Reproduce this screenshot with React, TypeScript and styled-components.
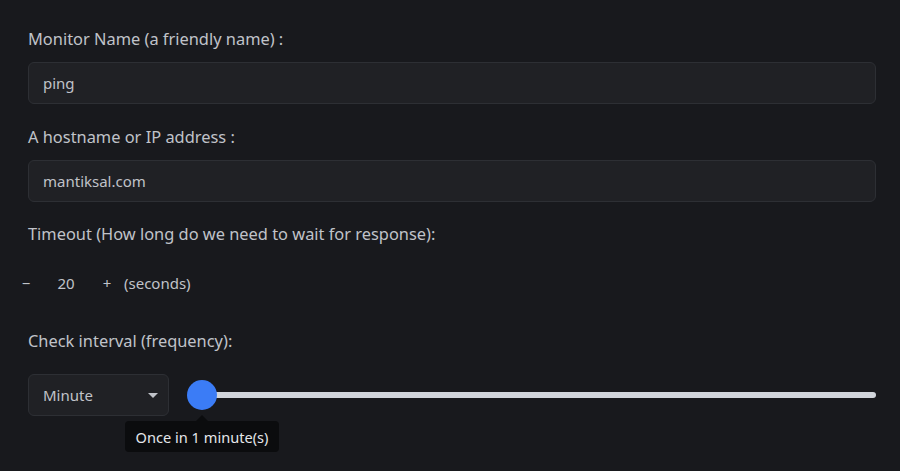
import React from "react";
import styled, { createGlobalStyle } from "styled-components";

const Global = createGlobalStyle`
  html, body { margin: 0; padding: 0; background: #18191d; }
  body { font-family: "Noto Sans", "Open Sans", sans-serif; color: #c0c3c9; }
  * { box-sizing: border-box; }
`;

const Page = styled.div`
  padding: 27px 24px 20px 28px;
  width: 900px;
  height: 471px;
  overflow: hidden;
`;

const Field = styled.div<{ $mb?: number }>`
  display: flex;
  flex-direction: column;
  margin-bottom: ${(p) => p.$mb ?? 21}px;
`;

const Label = styled.label`
  font-size: 16.4px;
  line-height: 24px;
  margin-bottom: 11px;
  color: #c0c3c9;
`;

const Input = styled.div`
  height: 42px;
  background: #202125;
  border: 1px solid #2d2f34;
  border-radius: 6px;
  padding: 0 14px;
  display: flex;
  align-items: center;
  font-size: 15px;
  color: #c0c3c9;
`;

const Stepper = styled.div`
  display: flex;
  align-items: center;
  height: 36px;
  margin-left: -12px;
  margin-top: 8px;
  font-size: 15px;
  color: #c0c3c9;
`;

const StepButton = styled.span<{ $w: number }>`
  width: ${(p) => p.$w}px;
  text-align: center;
`;

const StepValue = styled.span`
  width: 36px;
  text-align: center;
  margin: 0 15px 0 12px;
`;

const Unit = styled.span`
  margin-left: 9px;
`;

const Row = styled.div`
  display: flex;
  align-items: center;
  gap: 19px;
  margin-top: 10px;
`;

const Select = styled.div`
  width: 141px;
  height: 42px;
  background: #202125;
  border: 1px solid #2d2f34;
  border-radius: 6px;
  padding: 0 10px 0 14px;
  display: flex;
  align-items: center;
  justify-content: space-between;
  font-size: 15px;
  color: #c0c3c9;
`;

const Caret = styled.span`
  width: 0;
  height: 0;
  border-left: 5.5px solid transparent;
  border-right: 5.5px solid transparent;
  border-top: 5.5px solid #c0c3c9;
`;

const Slider = styled.div`
  position: relative;
  flex: 1;
  height: 30px;
  display: flex;
  align-items: center;
`;

const Track = styled.div`
  flex: 1;
  height: 6px;
  background: #d1d5db;
  border-radius: 3px;
  margin-left: 2px;
`;

const Thumb = styled.div`
  position: absolute;
  left: -1px;
  top: 0;
  width: 30px;
  height: 30px;
  border-radius: 50%;
  background: #3b7cf6;
`;

const Tooltip = styled.div`
  position: absolute;
  left: -63px;
  top: 41px;
  width: 154px;
  height: 31px;
  background: #0b0c0e;
  border-radius: 4px;
  color: #e4e6ea;
  font-size: 14.6px;
  display: flex;
  align-items: center;
  justify-content: center;
  &::before {
    content: "";
    position: absolute;
    left: 71px;
    top: -6px;
    border-left: 6px solid transparent;
    border-right: 6px solid transparent;
    border-bottom: 6px solid #0b0c0e;
  }
`;

export default function App() {
  return (
    <>
      <Global />
      <Page>
        <Field>
          <Label>Monitor Name (a friendly name) :</Label>
          <Input>ping</Input>
        </Field>
        <Field $mb={20}>
          <Label>A hostname or IP address :</Label>
          <Input>mantiksal.com</Input>
        </Field>
        <Field $mb={28}>
          <Label>Timeout (How long do we need to wait for response):</Label>
          <Stepper>
            <StepButton $w={20}>−</StepButton>
            <StepValue>20</StepValue>
            <StepButton $w={16}>+</StepButton>
            <Unit>(seconds)</Unit>
          </Stepper>
        </Field>
        <Field>
          <Label>Check interval (frequency):</Label>
          <Row>
            <Select>
              Minute
              <Caret />
            </Select>
            <Slider>
              <Track />
              <Thumb />
              <Tooltip>Once in 1 minute(s)</Tooltip>
            </Slider>
          </Row>
        </Field>
      </Page>
    </>
  );
}
